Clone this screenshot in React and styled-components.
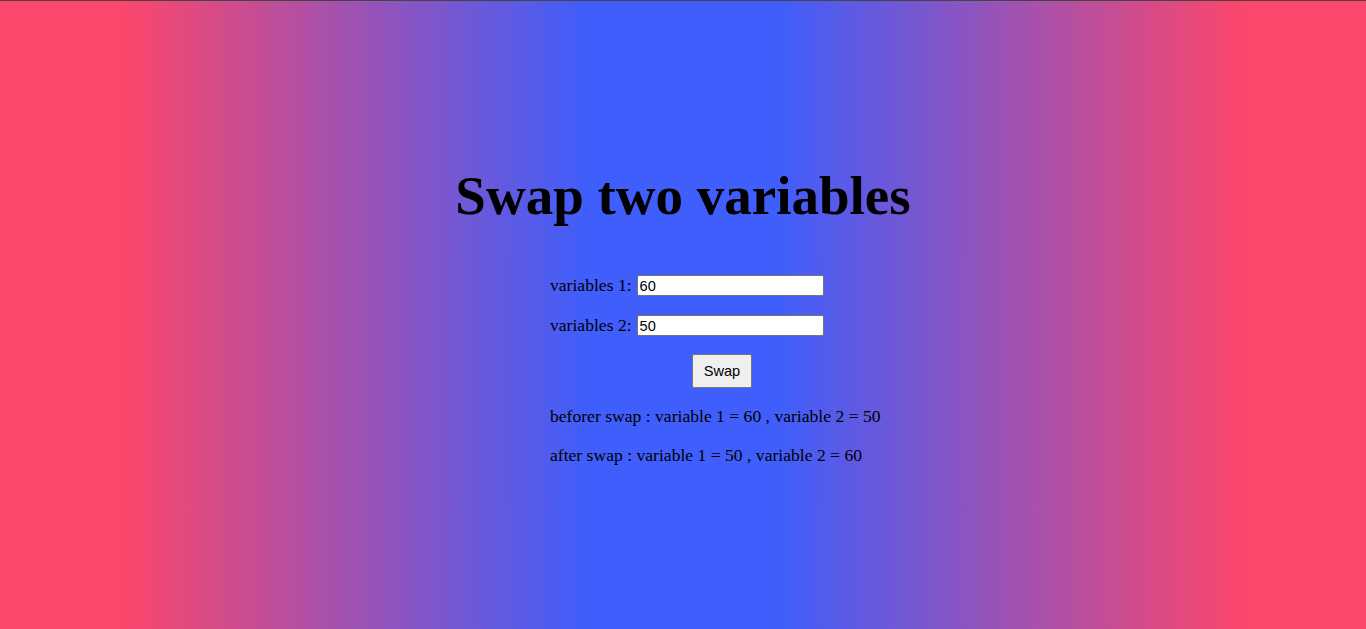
import React, { useState } from 'react'
import styled, { createGlobalStyle } from 'styled-components'

const GlobalStyle = createGlobalStyle`
  html, body {
    margin: 0;
    padding: 0;
    height: 100%;
  }
  #root {
    min-height: 100%;
  }
`

const Page = styled.div`
  min-height: 629px;
  box-sizing: border-box;
  border-top: 1px solid #444;
  background: linear-gradient(90deg, #fc466b 9%, #3f5efb 43%, #3f5efb 57%, #fc466b 91%);
  font-family: "Liberation Serif", "Times New Roman", serif;
  font-size: 17.6px;
  color: #000;
  padding-top: 160px;
`

const Title = styled.h1`
  margin: 0;
  text-align: center;
  font-size: 55px;
  font-weight: bold;
  line-height: 70px;
`

const Form = styled.div`
  width: 344px;
  margin: 44px 0 0 calc(50% - 133px);
  display: flex;
  flex-direction: column;
`

const Row = styled.label`
  display: flex;
  align-items: center;
  height: 21px;
  margin-bottom: 19px;
`

const LabelText = styled.span`
  margin-right: 5px;
`

const Input = styled.input`
  width: 187px;
  height: 21px;
  box-sizing: border-box;
  padding: 1px 2px;
  border: 1px solid #767676;
  border-radius: 2px;
  background: #fff;
  font-family: "Liberation Sans", Arial, sans-serif;
  font-size: 14.6px;
  color: #000;
`

const SwapButton = styled.button`
  align-self: center;
  width: 60px;
  height: 34px;
  margin-top: -1px;
  border: 1px solid #767676;
  border-radius: 2px;
  background: #efefef;
  font-family: "Liberation Sans", Arial, sans-serif;
  font-size: 14.6px;
  color: #000;
  cursor: pointer;
`

const Result = styled.p`
  margin: 0;
  line-height: 20px;
  margin-top: ${p => p.$gap}px;
`

const App = () => {
  const [a, setA] = useState('60')
  const [b, setB] = useState('50')
  const [before, setBefore] = useState({ a: '60', b: '50' })
  const [after, setAfter] = useState({ a: '50', b: '60' })

  const handleSwap = () => {
    setBefore({ a, b })
    setAfter({ a: b, b: a })
    setA(b)
    setB(a)
  }

  return (
    <Page>
      <GlobalStyle />
      <Title>Swap two variables</Title>
      <Form>
        <Row>
          <LabelText>variables 1:</LabelText>
          <Input value={a} onChange={e => setA(e.target.value)} />
        </Row>
        <Row>
          <LabelText>variables 2:</LabelText>
          <Input value={b} onChange={e => setB(e.target.value)} />
        </Row>
        <SwapButton onClick={handleSwap}>Swap</SwapButton>
        <Result $gap={18}>beforer swap : variable 1 = {before.a} , variable 2 = {before.b}</Result>
        <Result $gap={19}>after swap : variable 1 = {after.a} , variable 2 = {after.b}</Result>
      </Form>
    </Page>
  )
}

export default App
